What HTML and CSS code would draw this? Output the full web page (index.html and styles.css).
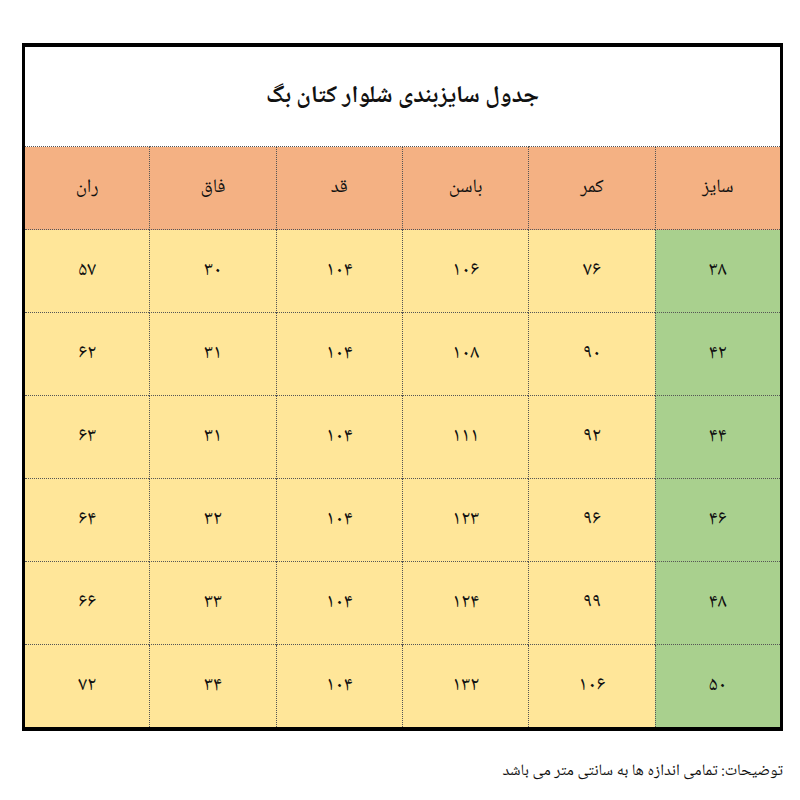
FILE: index.html
```html
<!DOCTYPE html>
<html lang="fa" dir="rtl">
<head>
<meta charset="utf-8">
<link rel="stylesheet" href="styles.css">
</head>
<body>
<div class="page">
<table class="size-table">
  <tr class="title-row"><td colspan="6">جدول سایزبندی شلوار کتان بگ</td></tr>
  <tr class="head-row"><td>سایز</td><td>کمر</td><td>باسن</td><td>قد</td><td>فاق</td><td>ران</td></tr>
  <tr class="data-row"><td class="size">۳۸</td><td>۷۶</td><td>۱۰۶</td><td>۱۰۴</td><td>۳۰</td><td>۵۷</td></tr>
  <tr class="data-row"><td class="size">۴۲</td><td>۹۰</td><td>۱۰۸</td><td>۱۰۴</td><td>۳۱</td><td>۶۲</td></tr>
  <tr class="data-row"><td class="size">۴۴</td><td>۹۲</td><td>۱۱۱</td><td>۱۰۴</td><td>۳۱</td><td>۶۳</td></tr>
  <tr class="data-row"><td class="size">۴۶</td><td>۹۶</td><td>۱۲۳</td><td>۱۰۴</td><td>۳۲</td><td>۶۴</td></tr>
  <tr class="data-row"><td class="size">۴۸</td><td>۹۹</td><td>۱۲۴</td><td>۱۰۴</td><td>۳۳</td><td>۶۶</td></tr>
  <tr class="data-row"><td class="size">۵۰</td><td>۱۰۶</td><td>۱۳۲</td><td>۱۰۴</td><td>۳۴</td><td>۷۲</td></tr>
</table>
<p class="note">توضیحات: تمامی اندازه ها به سانتی متر می باشد</p>
</div>
</body>
</html>
```

FILE: styles.css
```css
html, body {
  margin: 0;
  padding: 0;
  background: #ffffff;
}
body {
  font-family: "Noto Naskh Arabic", "Noto Sans Arabic", "DejaVu Sans Condensed", "DejaVu Sans", sans-serif;
  color: #111;
}
.page {
  padding: 43px 17px 0 22px;
}
.size-table {
  width: 761px;
  border-collapse: collapse;
  border: 3px solid #000;
  border-top-width: 4px;
  border-bottom-width: 4px;
  table-layout: fixed;
}
.size-table td {
  text-align: center;
  vertical-align: middle;
  border: 1px dotted #555;
  font-size: 20px;
  padding: 0;
}
.title-row td {
  height: 99px;
  background: #fff;
  font-size: 24px;
  font-weight: bold;
  border: none;
  border-bottom: 1px dotted #555;
}
.head-row td {
  height: 82px;
  background: #f4b183;
  font-size: 19px;
}
.data-row td {
  height: 82px;
  background: #ffe699;
}
.data-row td.size {
  background: #a9d08e;
}
.note {
  margin: 27px 0 0 0;
  text-align: right;
  font-size: 16px;
}
```
